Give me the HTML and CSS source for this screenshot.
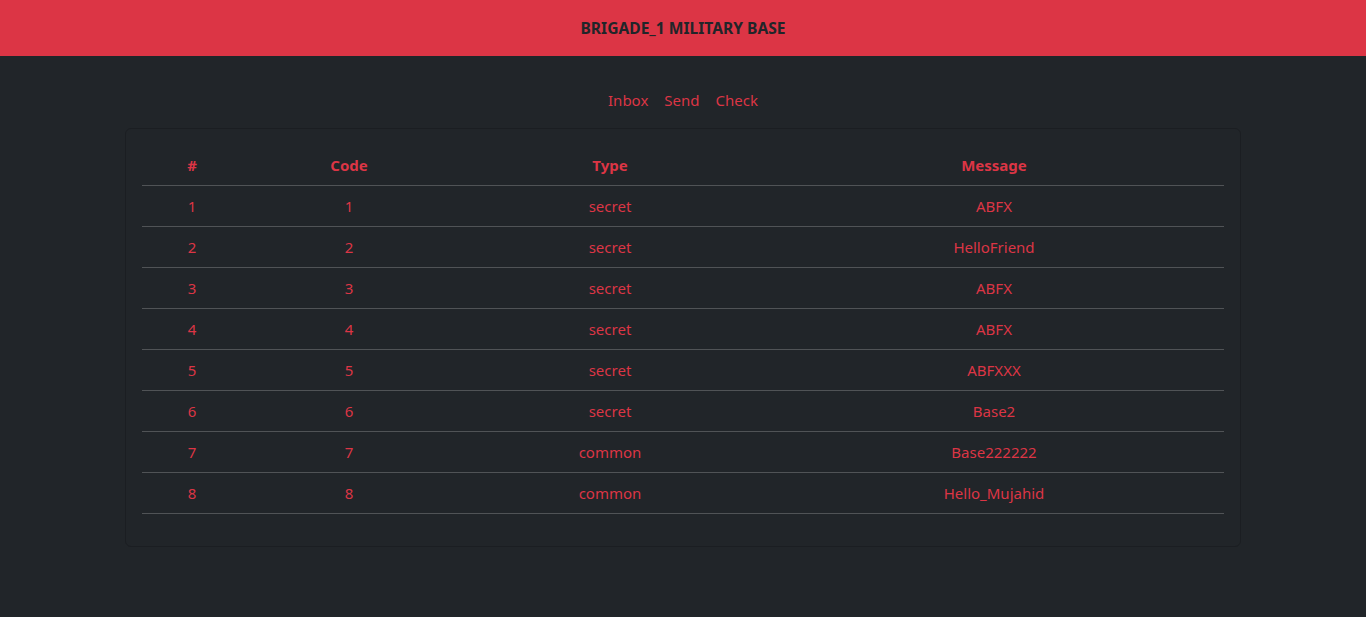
FILE: index.html
```html
<!DOCTYPE html>
<html lang="en">
<head>
<meta charset="utf-8">
<title>Brigade_1 Military Base</title>
<link rel="stylesheet" href="styles.css">
</head>
<body>
<header class="topbar">
  <h1 class="title">BRIGADE_1 MILITARY BASE</h1>
</header>
<nav class="nav">
  <a class="nav-link" href="#">Inbox</a>
  <a class="nav-link" href="#">Send</a>
  <a class="nav-link" href="#">Check</a>
</nav>
<main class="container">
  <div class="card">
    <table class="table">
      <colgroup>
        <col class="c1"><col class="c2"><col class="c3"><col class="c4">
      </colgroup>
      <thead>
        <tr><th>#</th><th>Code</th><th>Type</th><th>Message</th></tr>
      </thead>
      <tbody>
        <tr><td>1</td><td>1</td><td>secret</td><td>ABFX</td></tr>
        <tr><td>2</td><td>2</td><td>secret</td><td>HelloFriend</td></tr>
        <tr><td>3</td><td>3</td><td>secret</td><td>ABFX</td></tr>
        <tr><td>4</td><td>4</td><td>secret</td><td>ABFX</td></tr>
        <tr><td>5</td><td>5</td><td>secret</td><td>ABFXXX</td></tr>
        <tr><td>6</td><td>6</td><td>secret</td><td>Base2</td></tr>
        <tr><td>7</td><td>7</td><td>common</td><td>Base222222</td></tr>
        <tr><td>8</td><td>8</td><td>common</td><td>Hello_Mujahid</td></tr>
      </tbody>
    </table>
  </div>
</main>
</body>
</html>
```
FILE: styles.css
```css
* { box-sizing: border-box; }
body {
  margin: 0;
  background: #212529;
  color: #dc3545;
  font-family: "Noto Sans", "Open Sans", sans-serif;
  font-size: 15px;
  line-height: 24px;
}
.topbar {
  background: #dc3545;
  height: 56px;
  display: flex;
  align-items: center;
  justify-content: center;
}
.title {
  margin: 0;
  font-size: 15.6px;
  font-weight: 700;
  color: #212529;
  line-height: 24px;
}
.nav {
  display: flex;
  justify-content: center;
  margin: 24px 0 8px;
}
.nav-link {
  color: #dc3545;
  text-decoration: none;
  padding: 8px 8px;
  line-height: 24px;
}
.container {
  width: 1140px;
  margin: 0 auto;
  padding: 0 12px;
}
.card {
  border: 1px solid #1b1e22;
  border-radius: 6px;
  padding: 16px;
}
.table {
  width: 100%;
  border-collapse: collapse;
  margin-bottom: 16px;
}
.c1 { width: 100px; }
.c2 { width: 214px; }
.c3 { width: 308px; }
.c4 { width: 460px; }
.table th, .table td {
  text-align: center;
  padding: 8px;
  border-bottom: 1px solid #505356;
  line-height: 24px;
}
.table th { font-weight: 700; }
.table td { font-weight: 400; }
```
